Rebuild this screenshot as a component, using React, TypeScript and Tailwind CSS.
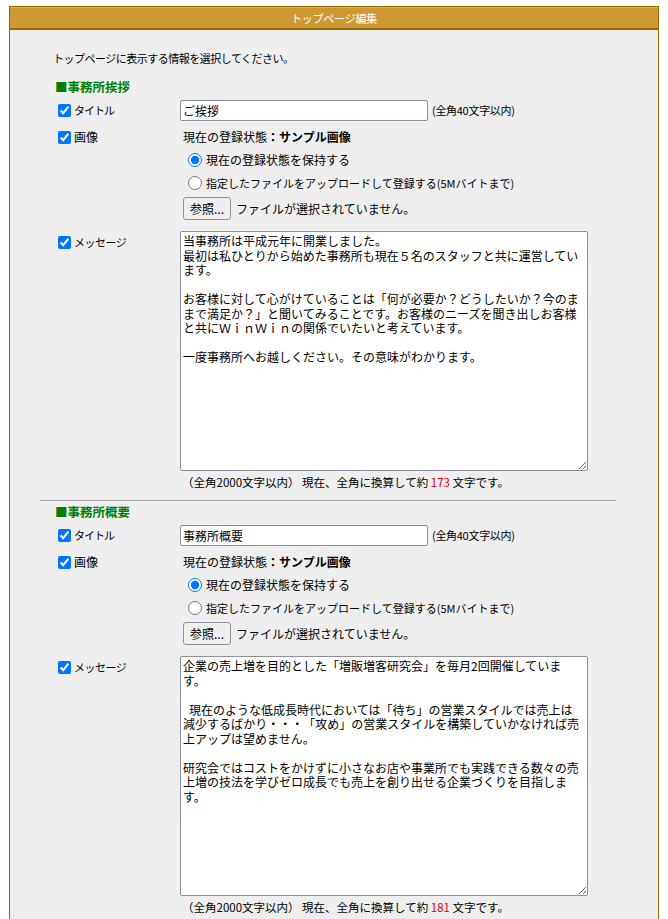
import React from "react";

type SectionProps = {
  name: string;
  title: string;
  message: string;
  count: number;
};

function CheckLabel({ text, textClass }: { text: string; textClass: string }) {
  return (
    <label className="ml-[18px] w-[122px] shrink-0 flex items-center gap-[3px]">
      <input type="checkbox" defaultChecked className="m-0 w-[13px] h-[13px] shrink-0" />
      <span className={textClass}>{text}</span>
    </label>
  );
}

function Section({ name, title, message, count }: SectionProps) {
  return (
    <div>
      <div className="h-[20px] ml-[15px] flex items-center text-[12.5px] font-bold text-[#008000] leading-[20px]">
        ■{name}
      </div>

      <div className="mt-[2px] h-[23px] flex items-center">
        <CheckLabel text="タイトル" textClass="text-[11px] tracking-[-1px]" />
        <input
          type="text"
          defaultValue={title}
          className="w-[248px] h-[21px] px-[2px] py-[1px] bg-white border border-[#8f8f9d] rounded-[2px] text-[12px] text-black outline-none"
        />
        <span className="ml-[4px] text-[11px] tracking-[-0.3px]">(全角40文字以内)</span>
      </div>

      <div className="mt-[2px] h-[26px] flex items-center">
        <CheckLabel text="画像" textClass="text-[12px]" />
        <span className="ml-[3px] text-[12px]">
          現在の登録状態<b>：サンプル画像</b>
        </span>
      </div>

      <label className="ml-[148px] h-[20px] flex items-center">
        <input type="radio" name={"img-" + name} defaultChecked className="m-0 w-[14px] h-[14px]" />
        <span className="ml-[4px] text-[12px]">現在の登録状態を保持する</span>
      </label>

      <label className="mt-[3px] ml-[148px] h-[20px] flex items-center">
        <input type="radio" name={"img-" + name} className="m-0 w-[14px] h-[14px]" />
        <span className="ml-[4px] text-[11px]">指定したファイルをアップロードして登録する(5Mバイトまで)</span>
      </label>

      <div className="mt-[4px] ml-[143px] h-[23px] flex items-center">
        <button
          type="button"
          className="w-[48px] h-[23px] bg-[#efefef] border border-[#8f8f9d] rounded-[3px] text-[12px] text-black flex items-center justify-center"
        >
          参照...
        </button>
        <span className="ml-[5px] text-[12px]">ファイルが選択されていません。</span>
      </div>

      <div className="mt-[11px] flex items-start">
        <div className="pt-[3px]">
          <CheckLabel text="メッセージ" textClass="text-[11px] tracking-[-0.5px]" />
        </div>
        <textarea
          readOnly
          wrap="off"
          defaultValue={message}
          className="w-[408px] h-[240px] p-[2px] bg-white border border-[#8f8f9d] rounded-[2px] text-[12px] leading-[14.5px] text-black outline-none overflow-hidden font-['Noto_Sans_CJK_JP',sans-serif] [text-spacing-trim:space-all]"
        />
      </div>

      <div className="mt-[2px] ml-[142px] h-[20px] flex items-center text-[11.5px]">
        <span>
          （全角2000文字以内） 現在、全角に換算して約 <span className="text-[#e00000]">{count}</span> 文字です。
        </span>
      </div>

      <div className="mt-[7px] border-t border-[#a6a6a6]" />
    </div>
  );
}

const msg1 = [
  "当事務所は平成元年に開業しました。",
  "最初は私ひとりから始めた事務所も現在５名のスタッフと共に運営してい",
  "ます。",
  "",
  "お客様に対して心がけていることは「何が必要か？どうしたいか？今のま",
  "まで満足か？」と聞いてみることです。お客様のニーズを聞き出しお客様",
  "と共にＷｉｎＷｉｎの関係でいたいと考えています。",
  "",
  "一度事務所へお越しください。その意味がわかります。",
].join("\n");

const msg2 = [
  "企業の売上増を目的とした「増販増客研究会」を毎月2回開催していま",
  "す。",
  "",
  "\u2002現在のような低成長時代においては「待ち」の営業スタイルでは売上は",
  "減少するばかり・・・「攻め」の営業スタイルを構築していかなければ売",
  "上アップは望めません。",
  "",
  "研究会ではコストをかけずに小さなお店や事業所でも実践できる数々の売",
  "上増の技法を学びゼロ成長でも売上を創り出せる企業づくりを目指しま",
  "す。",
].join("\n");

export default function App() {
  return (
    <div className="min-h-screen bg-white pt-[6px] font-['Noto_Sans_CJK_JP','Noto_Sans',sans-serif] text-black [text-spacing-trim:space-all]">
      <div className="ml-[9px] w-[650px] border border-[#996600] bg-[#eeeeee] pb-[30px]">
        <div className="h-[23px] bg-[#cc9933] border-t border-t-[#ddb055] border-b-2 border-b-[#996600] flex items-center justify-center text-white text-[11px] tracking-[-0.2px]">
          トップページ編集
        </div>
        <div className="ml-[30px] w-[576px]">
          <div className="mt-[18px] h-[20px] ml-[13px] flex items-center text-[11px] tracking-[-0.5px]">
            トップページに表示する情報を選択してください。
          </div>
          <div className="mt-[9px]">
            <Section name="事務所挨拶" title="ご挨拶" message={msg1} count={173} />
          </div>
          <div className="mt-[1px]">
            <Section name="事務所概要" title="事務所概要" message={msg2} count={181} />
          </div>
        </div>
      </div>
    </div>
  );
}
